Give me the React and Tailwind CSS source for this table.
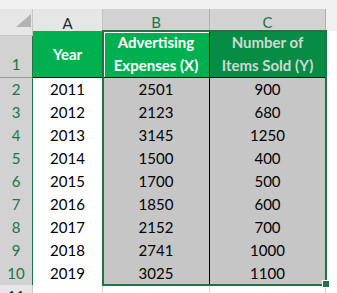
import React from "react";

const rows = [
  ["2011", "2501", "900"],
  ["2012", "2123", "680"],
  ["2013", "3145", "1250"],
  ["2014", "1500", "400"],
  ["2015", "1700", "500"],
  ["2016", "1850", "600"],
  ["2017", "2152", "700"],
  ["2018", "2741", "1000"],
  ["2019", "3025", "1100"],
];

export default function App() {
  return (
    <div
      className="relative w-[337px] h-[293px] overflow-hidden bg-white text-black"
      style={{ fontFamily: "Lato, 'Open Sans', sans-serif" }}
    >
      <div className="h-[9px] bg-[#f0f0f0]" />
      {/* column header row */}
      <div className="grid grid-cols-[33px_70px_107px_116px_11px] h-[22px]">
        <div className="relative bg-[#e6e6e6] border-r border-b border-[#c6c6c6]">
          <svg className="absolute left-[16px] top-[5px]" width="15" height="13" viewBox="0 0 15 13">
            <polygon points="0,13 15,13 15,0" fill="#b3b3b3" />
          </svg>
        </div>
        <div className="bg-[#e6e6e6] border-r border-b border-[#c6c6c6] flex items-center justify-center pt-[2px] text-[15px] text-[#262626]">
          A
        </div>
        <div className="bg-[#d2d2d2] border-r border-[#b0b0b0] border-b-2 border-b-[#217346] flex items-center justify-center pt-[2px] text-[15px] text-[#217346]">
          B
        </div>
        <div className="bg-[#d2d2d2] border-r border-[#b0b0b0] border-b-2 border-b-[#217346] flex items-center justify-center pt-[2px] text-[15px] text-[#217346]">
          C
        </div>
        <div className="bg-[#f0f0f0]" />
      </div>
      {/* row 1 */}
      <div className="grid grid-cols-[33px_70px_107px_116px_11px] h-[47px]">
        <div className="bg-[#d2d2d2] border-r border-r-[#217346] border-b border-b-[#9e9e9e] flex items-end justify-center pb-[2px] text-[15px] text-[#217346]">
          1
        </div>
        <div className="bg-[#00b050] border-r border-b border-black flex items-center justify-center text-[15px] font-bold text-white">
          Year
        </div>
        <div className="bg-[#00b050] border-r border-b border-black flex flex-col items-center justify-center text-[15px] font-bold text-white leading-[23px]">
          <span>Advertising</span>
          <span>Expenses (X)</span>
        </div>
        <div className="bg-[#078c45] border-r border-b border-black flex flex-col items-center justify-center text-[15px] font-bold text-[#cfd8d2] leading-[23px]">
          <span>Number of</span>
          <span>Items Sold (Y)</span>
        </div>
        <div className="bg-white" />
      </div>
      {rows.map((r, i) => (
        <div key={i} className="grid grid-cols-[33px_70px_107px_116px_11px] h-[23px]">
          <div className="bg-[#d2d2d2] border-r border-r-[#217346] border-b border-b-[#9e9e9e] flex items-center justify-center text-[15px] text-[#217346]">
            {i + 2}
          </div>
          <div className="bg-white border-r border-b border-black flex items-center justify-center text-[15px]">
            {r[0]}
          </div>
          <div className="bg-[#c6c6c6] border-r border-b border-black flex items-center justify-center text-[15px]">
            {r[1]}
          </div>
          <div className="bg-[#c6c6c6] border-r border-b border-black flex items-center justify-center text-[15px]">
            {r[2]}
          </div>
          <div className="bg-white" />
        </div>
      ))}
      {/* row 11 */}
      <div className="grid grid-cols-[33px_70px_107px_116px_11px] h-[23px]">
        <div className="bg-[#e6e6e6] border-r border-[#c6c6c6] flex items-center justify-center text-[15px] text-[#262626]">
          11
        </div>
        <div className="bg-white border-r border-[#d4d4d4]" />
        <div className="bg-white border-r border-[#d4d4d4]" />
        <div className="bg-white border-r border-[#d4d4d4]" />
        <div className="bg-white" />
      </div>

      {/* selection outline */}
      <div className="absolute left-[102px] top-[30px] w-[225px] h-[256px] border-2 border-[#217346] pointer-events-none" />
      {/* active cell inner white edge */}
      <div className="absolute left-[104px] top-[32px] w-[105px] h-[45px] border-t border-l border-white pointer-events-none" />
      {/* fill handle */}
      <div className="absolute left-[322px] top-[280px] w-[8px] h-[8px] bg-[#217346] border border-white" />
    </div>
  );
}
